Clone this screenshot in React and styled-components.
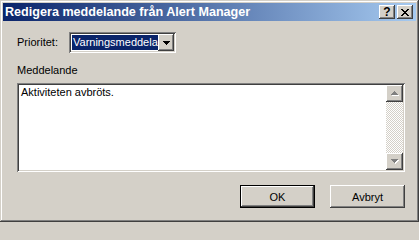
import React from "react";
import styled, { createGlobalStyle } from "styled-components";

const Global = createGlobalStyle`
  html, body { margin: 0; padding: 0; background: #d4d0c8; }
  * { box-sizing: border-box; }
`;

const raised = `
  box-shadow: inset -1px -1px #404040, inset 1px 1px #ffffff,
    inset -2px -2px #808080, inset 2px 2px #d4d0c8;
`;
const sunken = `
  box-shadow: inset 1px 1px #808080, inset -1px -1px #ffffff,
    inset 2px 2px #404040, inset -2px -2px #d4d0c8;
`;

const Window = styled.div`
  width: 419px;
  height: 222px;
  padding: 3px;
  background: #d4d0c8;
  display: flex;
  flex-direction: column;
  box-shadow: inset -1px -1px #404040, inset 1px 1px #d4d0c8,
    inset -2px -2px #808080, inset 2px 2px #ffffff;
  font-family: "Liberation Sans", Arial, sans-serif;
  font-size: 11px;
  color: #000;
`;

const TitleBar = styled.div`
  height: 18px;
  display: flex;
  align-items: center;
  padding: 0 3px 0 2px;
  background: linear-gradient(to right, #0a246a, #a6caf0);
`;

const Title = styled.div`
  flex: 1;
  color: #fff;
  font-weight: bold;
  font-size: 12.6px;
  white-space: nowrap;
  overflow: hidden;
`;

const CaptionButton = styled.div`
  width: 16px;
  height: 14px;
  background: #d4d0c8;
  ${raised}
  display: flex;
  align-items: center;
  justify-content: center;
  margin-left: ${(p) => (p.$gap ? p.$gap : 0)}px;
  font-weight: bold;
  font-size: 12px;
  line-height: 14px;
  color: #000;
`;

const Body = styled.div`
  flex: 1;
  display: flex;
  flex-direction: column;
  padding: 11px 11px 0 14px;
`;

const Row = styled.div`
  display: flex;
  align-items: center;
  height: 21px;
`;

const Label = styled.div`
  width: ${(p) => (p.$width ? `${p.$width}px` : "auto")};
  line-height: 13px;
  margin-top: ${(p) => p.$top || 0}px;
  white-space: nowrap;
`;

const Combo = styled.div`
  width: 107px;
  height: 21px;
  padding: 2px;
  background: #fff;
  ${sunken}
  display: flex;
`;

const ComboValue = styled.div`
  flex: 1;
  margin: 1px 0 1px 1px;
  background: #0a246a;
  color: #fff;
  line-height: 15px;
  padding-left: 1px;
  white-space: nowrap;
  overflow: hidden;
`;

const ArrowButton = styled.div`
  width: ${(p) => p.$w || 16}px;
  height: 17px;
  flex: none;
  background: #d4d0c8;
  ${raised}
  display: flex;
  align-items: center;
  justify-content: center;
`;

const TextBox = styled.div`
  margin-top: 6px;
  height: 89px;
  padding: 2px;
  background: #fff;
  ${sunken}
  display: flex;
`;

const TextContent = styled.div`
  flex: 1;
  padding: 1px 2px;
  line-height: 13px;
`;

const ScrollBar = styled.div`
  width: 17px;
  display: flex;
  flex-direction: column;
`;

const Track = styled.div`
  flex: 1;
  background: repeating-conic-gradient(#ffffff 0 25%, #d4d0c8 0 50%) 0 0 / 2px 2px;
`;

const ButtonRow = styled.div`
  margin-top: 13px;
  display: flex;
  justify-content: flex-end;
  gap: 15px;
`;

const Button = styled.div`
  width: 75px;
  height: 23px;
  background: #d4d0c8;
  display: flex;
  align-items: center;
  justify-content: center;
  ${(p) =>
    p.$default
      ? `box-shadow: inset 0 0 0 1px #000, inset -2px -2px #404040, inset 2px 2px #ffffff,
    inset -3px -3px #808080, inset 3px 3px #d4d0c8;`
      : raised}
`;

const DownTri = ({ color = "#000" }) => (
  <svg width="7" height="4" viewBox="0 0 7 4" shapeRendering="crispEdges">
    <path d="M0 0h7v1H0zM1 1h5v1H1zM2 2h3v1H2zM3 3h1v1H3z" fill={color} />
  </svg>
);

const DisabledArrow = ({ up }) => (
  <svg width="8" height="5" viewBox="0 0 8 5" shapeRendering="crispEdges">
    {up ? (
      <>
        <path d="M1 4h7v1H1zM4 1h1v1H4zM5 2h1v1H5zM6 3h1v1H6z" fill="#fff" />
        <path d="M3 0h1v1H3zM2 1h3v1H2zM1 2h5v1H1zM0 3h7v1H0z" fill="#808080" />
      </>
    ) : (
      <>
        <path d="M1 1h7v1H1zM2 2h5v1H2zM3 3h3v1H3zM4 4h1v1H4z" fill="#fff" />
        <path d="M0 0h7v1H0zM1 1h5v1H1zM2 2h3v1H2zM3 3h1v1H3z" fill="#808080" />
      </>
    )}
  </svg>
);

const CloseGlyph = () => (
  <svg width="8" height="7" viewBox="0 0 8 7" shapeRendering="crispEdges">
    <path
      d="M0 0h2v1H0zM6 0h2v1H6zM1 1h2v1H1zM5 1h2v1H5zM2 2h4v1H2zM3 3h2v1H3zM2 4h4v1H2zM1 5h2v1H1zM5 5h2v1H5zM0 6h2v1H0zM6 6h2v1H6z"
      fill="#000"
    />
  </svg>
);

export default function App() {
  return (
    <>
      <Global />
      <Window>
        <TitleBar>
          <Title>Redigera meddelande från Alert Manager</Title>
          <CaptionButton>?</CaptionButton>
          <CaptionButton $gap={2}>
            <CloseGlyph />
          </CaptionButton>
        </TitleBar>
        <Body>
          <Row>
            <Label $width={52}>Prioritet:</Label>
            <Combo>
              <ComboValue>Varningsmeddelande</ComboValue>
              <ArrowButton>
                <DownTri />
              </ArrowButton>
            </Combo>
          </Row>
          <Label $top={11}>Meddelande</Label>
          <TextBox>
            <TextContent>Aktiviteten avbröts.</TextContent>
            <ScrollBar>
              <ArrowButton $w={17}>
                <DisabledArrow up />
              </ArrowButton>
              <Track />
              <ArrowButton $w={17}>
                <DisabledArrow />
              </ArrowButton>
            </ScrollBar>
          </TextBox>
          <ButtonRow>
            <Button $default>OK</Button>
            <Button>Avbryt</Button>
          </ButtonRow>
        </Body>
      </Window>
    </>
  );
}
